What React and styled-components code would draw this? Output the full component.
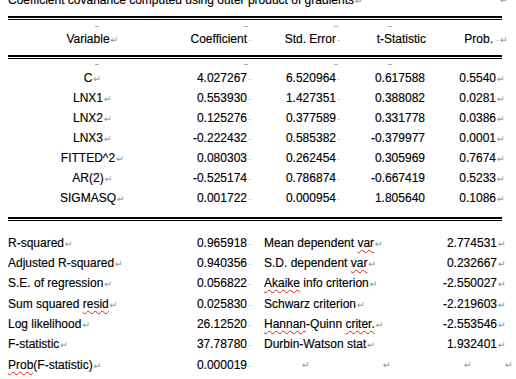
import React from "react";
import styled, { createGlobalStyle } from "styled-components";

const GlobalStyle = createGlobalStyle`
  html, body {
    margin: 0;
    padding: 0;
    background: #ffffff;
  }
  body {
    font-family: "Liberation Sans", Arial, sans-serif;
    font-size: 12px;
    color: #000000;
    overflow: hidden;
    -webkit-text-stroke: 0.15px #000;
  }
`;

const Page = styled.div`
  width: 516px;
  height: 379px;
  overflow: hidden;
  padding-left: 8px;
  box-sizing: border-box;
`;

const Title = styled.div`
  display: flex;
  justify-content: space-between;
  width: 500px;
  height: 14px;
  line-height: 14px;
  margin-top: -7px;
  white-space: nowrap;
`;

const Rule = styled.div`
  width: 494px;
  height: 1px;
  border-top: 2px solid #000;
  border-bottom: 1px solid #000;
  margin-top: ${(p) => p.$top || 0}px;
`;

const Section = styled.div`
  padding-top: ${(p) => p.$padTop || 0}px;
  padding-bottom: ${(p) => p.$padBottom || 0}px;
`;

const Grid = styled.div`
  display: grid;
  grid-template-columns: ${(p) => p.$cols};
  grid-auto-rows: ${(p) => p.$row}px;
`;

const TickRow = styled.div`
  display: grid;
  grid-template-columns: ${(p) => p.$cols};
  height: 1px;
  margin-bottom: ${(p) => p.$gap || 0}px;
`;

const TickCell = styled.div`
  display: flex;
  height: 1px;
`;

const Tick = styled.span`
  display: block;
  width: 4px;
  height: 1px;
  background: #b0b0b0;
  margin-left: ${(p) => p.$x}px;
`;

const Cell = styled.div`
  display: flex;
  align-items: center;
  justify-content: ${(p) =>
    p.$align === "center" ? "center" : p.$align === "right" ? "flex-end" : "flex-start"};
  padding-right: ${(p) => p.$pr || 0}px;
  padding-left: ${(p) => p.$pl || 0}px;
  white-space: nowrap;
  line-height: 14px;
`;

const Text = styled.span`
  position: relative;
`;

const Trail = styled.span`
  display: inline-block;
  width: 0;
  overflow: visible;
  white-space: nowrap;
`;

const Mark = styled.span`
  font-family: "DejaVu Sans", sans-serif;
  font-size: 9.5px;
  color: #9a9a9a;
  -webkit-text-stroke: 0;
  margin-left: ${(p) => p.$x ?? 1}px;
`;

const Dot = styled.span`
  font-size: 9px;
  color: #8a8a8a;
  -webkit-text-stroke: 0;
  margin-left: ${(p) => p.$x ?? 1}px;
`;

const Squiggle = styled.span`
  text-decoration: underline wavy #e02020;
  text-decoration-thickness: 1px;
  text-underline-offset: 2px;
`;

const MarkLine = styled.div`
  display: flex;
  align-items: center;
  line-height: 14px;
`;

const TOP_COLS = "160px 82px 90px 90px 72px";
const LOW_COLS = "160px 82px 150px 108px";

const rows = [
  ["C", "4.027267", "6.520964", "0.617588", "0.5540"],
  ["LNX1", "0.553930", "1.427351", "0.388082", "0.0281"],
  ["LNX2", "0.125276", "0.377589", "0.331778", "0.0386"],
  ["LNX3", "-0.222432", "0.585382", "-0.379977", "0.0001"],
  ["FITTED^2", "0.080303", "0.262454", "0.305969", "0.7674"],
  ["AR(2)", "-0.525174", "0.786874", "-0.667419", "0.5233"],
  ["SIGMASQ", "0.001722", "0.000954", "1.805640", "0.1086"],
];

const stats = [
  [<>R-squared</>, "0.965918", <>Mean dependent <Squiggle>var</Squiggle></>, "2.774531"],
  [<>Adjusted R-squared</>, "0.940356", <>S.D. dependent <Squiggle>var</Squiggle></>, "0.232667"],
  [<>S.E. of regression</>, "0.056822", <><Squiggle>Akaike</Squiggle> info criterion</>, "-2.550027"],
  [<>Sum squared <Squiggle>resid</Squiggle></>, "0.025830", <>Schwarz criterion</>, "-2.219603"],
  [<>Log likelihood</>, "26.12520", <><Squiggle>Hannan</Squiggle>-Quinn <Squiggle>criter.</Squiggle></>, "-2.553546"],
  [<>F-statistic</>, "37.78780", <>Durbin-Watson stat</>, "1.932401"],
];

const Ticks = ({ gap }) => (
  <TickRow $cols={TOP_COLS} $gap={gap}>
    <TickCell><Tick $x={87} /></TickCell>
    <TickCell><Tick $x={76} /></TickCell>
    <TickCell><Tick $x={84} /></TickCell>
    <TickCell><Tick $x={48} /></TickCell>
    <TickCell><Tick $x={36} /><Tick $x={36} /></TickCell>
  </TickRow>
);

const App = () => {
  return (
    <Page>
      <GlobalStyle />
      <Title>
        <span>Coefficient covariance computed using outer product of gradients<Mark>↵</Mark></span>
        <Mark>↵</Mark>
      </Title>

      <Rule $top={9} />
      <Section $padTop={6} $padBottom={9}>
        <Ticks gap={5} />
        <Grid $cols={TOP_COLS} $row={14}>
          <Cell $align="center">
            <Text>Variable<Trail><Mark>↵</Mark></Trail></Text>
          </Cell>
          <Cell $align="right" $pr={3}>
            <Text>Coefficient<Trail><Dot>·</Dot></Trail></Text>
          </Cell>
          <Cell $align="right" $pr={4}>
            <Text>Std. Error<Trail><Dot>·</Dot></Trail></Text>
          </Cell>
          <Cell $align="right" $pr={4}>
            <Text>t-Statistic</Text>
          </Cell>
          <Cell $align="right" $pr={9}>
            <Text>Prob.<Trail><Dot $x={3}>·</Dot><Mark $x={1}>↵</Mark></Trail></Text>
          </Cell>
        </Grid>
      </Section>

      <Rule />
      <Section $padTop={5} $padBottom={9}>
        <Ticks gap={3} />
        <Grid $cols={TOP_COLS} $row={20}>
          {rows.map((r) => (
            <React.Fragment key={r[0]}>
              <Cell $align="center">
                <Text>{r[0]}<Trail><Mark>↵</Mark></Trail></Text>
              </Cell>
              <Cell $align="right" $pr={3}>
                <Text>{r[1]}<Trail><Dot>·</Dot></Trail></Text>
              </Cell>
              <Cell $align="right" $pr={4}>
                <Text>{r[2]}<Trail><Dot>·</Dot></Trail></Text>
              </Cell>
              <Cell $align="right" $pr={5}>
                <Text>{r[3]}</Text>
              </Cell>
              <Cell $align="right" $pr={6}>
                <Text>{r[4]}<Trail><Mark>↵</Mark></Trail></Text>
              </Cell>
            </React.Fragment>
          ))}
        </Grid>
      </Section>

      <Rule />
      <Section $padTop={12}>
        <Grid $cols={LOW_COLS} $row={20.33}>
          {stats.map((s, i) => (
            <React.Fragment key={i}>
              <Cell>
                <Text>{s[0]}<Mark>↵</Mark></Text>
              </Cell>
              <Cell $align="right" $pr={3}>
                <Text>{s[1]}<Trail><Dot>·</Dot></Trail></Text>
              </Cell>
              <Cell $pl={14}>
                <Text>{s[2]}<Mark>↵</Mark></Text>
              </Cell>
              <Cell $align="right" $pr={11}>
                <Text>{s[3]}<Trail><Mark>↵</Mark></Trail></Text>
              </Cell>
            </React.Fragment>
          ))}
          <Cell>
            <Text><Squiggle>Prob</Squiggle>(F-statistic)<Mark>↵</Mark></Text>
          </Cell>
          <Cell $align="right" $pr={3}>
            <Text>0.000019<Trail><Dot>·</Dot></Trail></Text>
          </Cell>
          <Cell>
            <MarkLine>
              <Mark $x={52}>↵</Mark>
              <Mark $x={73}>↵</Mark>
            </MarkLine>
          </Cell>
          <Cell>
            <MarkLine>
              <Mark $x={64}>↵</Mark>
              <Mark $x={33}>↵</Mark>
            </MarkLine>
          </Cell>
        </Grid>
      </Section>
    </Page>
  );
};

export default App;
